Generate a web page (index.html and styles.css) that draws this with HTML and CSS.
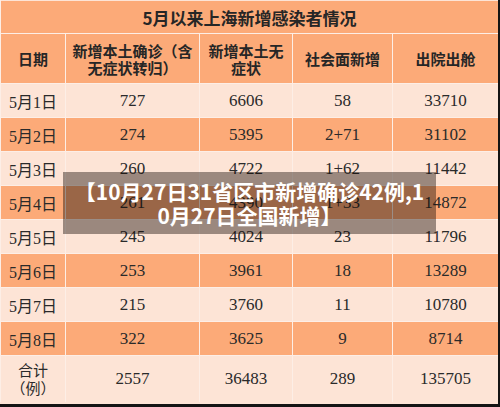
FILE: index.html
```html
<!DOCTYPE html>
<html>
<head>
  <meta charset="UTF-8" />
  <title>5月以来上海新增感染者情况</title>
  <link rel="stylesheet" href="styles.css">
</head>
<body>
  <div class="frame">
    <table class="stats">
      <colgroup>
        <col class="col-date">
        <col class="col-local">
        <col class="col-asym">
        <col class="col-social">
        <col class="col-out">
      </colgroup>
      <tr class="row-title">
        <td colspan="5">5月以来上海新增感染者情况</td>
      </tr>
      <tr class="row-head">
        <td>日期</td>
        <td><span class="line">新增本土确诊（含</span><br><span class="line">无症状转归）</span></td>
        <td><span class="line">新增本土无</span><br><span class="line">症状</span></td>
        <td>社会面新增</td>
        <td>出院出舱</td>
      </tr>
      <tr class="light"><td class="date">5月1日</td><td>727</td><td>6606</td><td>58</td><td>33710</td></tr>
      <tr class="dark"><td class="date">5月2日</td><td>274</td><td>5395</td><td>2+71</td><td>31102</td></tr>
      <tr class="light"><td class="date">5月3日</td><td>260</td><td>4722</td><td>1+62</td><td>11442</td></tr>
      <tr class="dark"><td class="date">5月4日</td><td>261</td><td>4390</td><td>1+33</td><td>14872</td></tr>
      <tr class="light"><td class="date">5月5日</td><td>245</td><td>4024</td><td>23</td><td>11796</td></tr>
      <tr class="dark"><td class="date">5月6日</td><td>253</td><td>3961</td><td>18</td><td>13289</td></tr>
      <tr class="light"><td class="date">5月7日</td><td>215</td><td>3760</td><td>11</td><td>10780</td></tr>
      <tr class="dark"><td class="date">5月8日</td><td>322</td><td>3625</td><td>9</td><td>8714</td></tr>
      <tr class="light row-total"><td class="date">合计<br>（例）</td><td>2557</td><td>36483</td><td>289</td><td>135705</td></tr>
    </table>

    <!-- 标题浮层 -->
    <div class="caption">【10月27日31省区市新增确诊42例,10月27日全国新增】</div>
  </div>
</body>
</html>
```

FILE: styles.css
```css
body {
  margin: 0;
  background-color: #fff;
  font-family: "Liberation Serif", "Noto Sans CJK SC", serif;
  color: #2a2a2a;
}
.frame {
  position: relative;
  width: 498px;
  height: 404px;
  overflow: hidden;
  border-right: 2px solid #141414;
  border-bottom: 3px solid #141414;
  background-color: #fde4d6;
}
.stats {
  width: 498px;
  border-collapse: collapse;
  table-layout: fixed;
  border-top: 1px solid #fde4d6;
}
.col-date { width: 65px; }
.col-local { width: 134px; }
.col-asym { width: 93px; }
.col-social { width: 100px; }
.col-out { width: 106px; }
.stats td {
  border: 1px solid #fdeee6;
  text-align: center;
  padding: 0;
  font-size: 17px;
  height: 33px;
}
.stats .row-title td {
  background-color: #fcaa78;
  font-family: "Noto Sans CJK SC", sans-serif;
  font-weight: 700;
  font-size: 17px;
  height: 32px;
  border-top: none;
  color: #262626;
}
.stats .row-head td {
  background-color: #fcaa78;
  font-family: "Noto Sans CJK SC", sans-serif;
  font-weight: 700;
  font-size: 15px;
  line-height: 17px;
  height: 49px;
  color: #262626;
}
.line {
  white-space: nowrap;
}
.light td {
  background-color: #fde4d6;
}
.dark td {
  background-color: #fcaa78;
}
.stats td.date {
  font-size: 16px;
}
.stats .row-total td {
  height: 46px;
  border-bottom: none;
}
.stats .row-total td.date {
  font-family: "Noto Sans CJK SC", sans-serif;
  font-size: 15px;
  line-height: 18px;
}
.caption {
  position: absolute;
  left: 63px;
  top: 172px;
  width: 373px;
  height: 62px;
  box-sizing: border-box;
  padding: 7px 11px;
  background-color: rgba(20, 10, 5, 0.42);
  color: #fff;
  font-family: "Noto Sans CJK SC", sans-serif;
  font-weight: 700;
  font-size: 21px;
  line-height: 24px;
  text-align: center;
  word-break: break-all;
}
```
